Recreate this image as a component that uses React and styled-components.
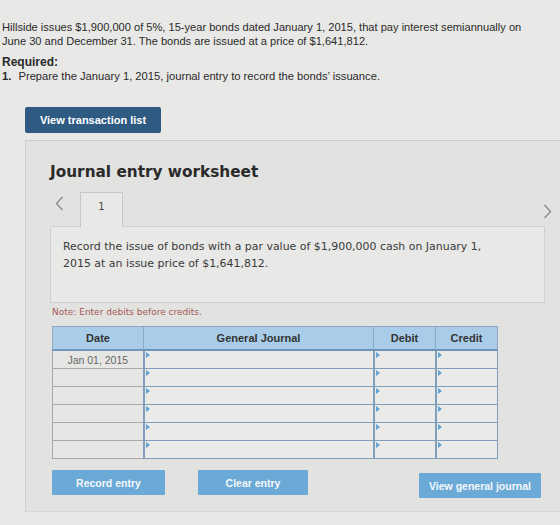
import React from "react";
import styled, { createGlobalStyle } from "styled-components";

const Global = createGlobalStyle`
  html, body { margin: 0; padding: 0; }
  body {
    background: #e8e8e6;
    font-family: "Liberation Sans", Arial, sans-serif;
    color: #2b2b2b;
    width: 560px;
    height: 525px;
    overflow: hidden;
  }
`;

const Page = styled.div`
  padding: 20px 0 0 2px;
`;

const Question = styled.p`
  margin: 0;
  font-size: 11.1px;
  line-height: 14px;
  color: #2a2a2a;
`;

const Required = styled.div`
  margin-top: 7px;
  font-size: 12px;
  line-height: 14px;
  font-weight: bold;
  color: #2a2a2a;
`;

const Step = styled.div`
  font-size: 11.2px;
  line-height: 15px;
  color: #2a2a2a;
  b { margin-right: 4px; }
`;

const DarkButton = styled.button`
  display: block;
  margin: 23px 0 0 25px;
  width: 136px;
  height: 26px;
  border: none;
  border-radius: 2px;
  background: #2f5b83;
  color: #fff;
  font-family: "Liberation Sans", Arial, sans-serif;
  font-weight: bold;
  font-size: 11px;
  padding: 0;
`;

const Panel = styled.section`
  margin: 7px 0 0 25px;
  border-top: 1px solid #c8c8c8;
  border-left: 1px solid #d0d0d0;
  border-bottom: 1px solid #d8d8d8;
  background: #e2e2e0;
  padding: 20px 0 0 24px;
  height: 372px;
  box-sizing: border-box;
`;

const Title = styled.h2`
  margin: 0;
  font-family: "DejaVu Sans", Verdana, sans-serif;
  font-weight: bold;
  font-size: 15.3px;
  line-height: 22px;
  color: #2a2a2a;
`;

const TabRow = styled.div`
  display: flex;
  align-items: flex-start;
  margin-top: 9px;
  height: 34px;
  position: relative;
`;

const Arrow = styled.span`
  box-sizing: border-box;
  width: 30px;
  padding: 4px 0 0 5px;
  display: flex;
`;

const Tab = styled.div`
  width: 43px;
  height: 35px;
  box-sizing: border-box;
  border: 1px solid #c8c8c8;
  border-bottom: none;
  background: #e8e8e6;
  font-family: "DejaVu Sans", sans-serif;
  font-size: 10px;
  color: #444;
  text-align: center;
  line-height: 28px;
  position: relative;
  z-index: 1;
`;

const NextArrow = styled.span`
  position: absolute;
  right: 8px;
  top: 12px;
  display: flex;
`;

const Chevron = ({ dir }) => (
  <svg width="9" height="15" viewBox="0 0 9 15">
    <polyline
      points={dir === "left" ? "7.5,1 1.5,7.5 7.5,14" : "1.5,1 7.5,7.5 1.5,14"}
      fill="none"
      stroke="#8c8c8c"
      strokeWidth="1.4"
    />
  </svg>
);

const Prompt = styled.div`
  width: 495px;
  height: 77px;
  box-sizing: border-box;
  border: 1px solid #cfcfcf;
  background: #e8e8e6;
  padding: 11px 12px;
  font-family: "DejaVu Sans", Verdana, sans-serif;
  font-size: 10.95px;
  line-height: 17px;
  color: #3a3a3a;
`;

const Note = styled.div`
  margin: 3px 0 0 2px;
  font-family: "DejaVu Sans", Verdana, sans-serif;
  font-size: 9px;
  color: #a45a55;
  line-height: 12px;
`;

const Table = styled.table`
  margin: 8px 0 0 2px;
  border-collapse: collapse;
  border: 1px solid #8fa8bd;
  table-layout: fixed;
`;

const Head = styled.th`
  background: #a9cde8;
  border: 1px solid #8fa8bd;
  border-bottom: 2px solid #6f96b8;
  height: 22px;
  padding: 0;
  font-size: 11px;
  font-weight: bold;
  color: #333;
  width: ${(p) => p.$w}px;
`;

const DateCell = styled.td`
  border: 1px solid #a8a8a8;
  background: #e6e6e4;
  height: 17px;
  padding: 0;
  font-size: 10.5px;
  color: #666;
  text-align: center;
`;

const InputCell = styled.td`
  border: 1px solid #7f9fbb;
  border-width: 1px 1px 1px 2px;
  background: #eaeae8;
  height: 17px;
  padding: 0;
  position: relative;
  &::before {
    content: "";
    position: absolute;
    left: 1px;
    top: 1px;
    border-left: 4px solid #5ea2d6;
    border-top: 3px solid transparent;
    border-bottom: 3px solid transparent;
  }
`;

const Actions = styled.div`
  display: flex;
  align-items: flex-start;
  margin: 11px 0 0 2px;
  width: 489px;
`;

const LightButton = styled.button`
  width: ${(p) => p.$w}px;
  height: 25px;
  margin-right: ${(p) => p.$gap || 0}px;
  margin-left: ${(p) => (p.$push ? "auto" : "0")};
  margin-top: ${(p) => p.$drop || 0}px;
  border: none;
  border-radius: 1px;
  background: #6ba9d7;
  color: #f4f8fb;
  font-family: "Liberation Sans", Arial, sans-serif;
  font-weight: bold;
  font-size: 10.5px;
  padding: 0;
`;

const rows = ["Jan 01, 2015", "", "", "", "", ""];

export default function App() {
  return (
    <>
      <Global />
      <Page>
        <Question>
          Hillside issues $1,900,000 of 5%, 15-year bonds dated January 1, 2015, that pay interest semiannually on
          <br />
          June 30 and December 31. The bonds are issued at a price of $1,641,812.
        </Question>
        <Required>Required:</Required>
        <Step>
          <b>1.</b> Prepare the January 1, 2015, journal entry to record the bonds’ issuance.
        </Step>
      </Page>
      <DarkButton>View transaction list</DarkButton>
      <Panel>
        <Title>Journal entry worksheet</Title>
        <TabRow>
          <Arrow>
            <Chevron dir="left" />
          </Arrow>
          <Tab>1</Tab>
          <NextArrow>
            <Chevron dir="right" />
          </NextArrow>
        </TabRow>
        <Prompt>
          Record the issue of bonds with a par value of $1,900,000 cash on January 1,
          <br />
          2015 at an issue price of $1,641,812.
        </Prompt>
        <Note>Note: Enter debits before credits.</Note>
        <Table>
          <thead>
            <tr>
              <Head $w={90}>Date</Head>
              <Head $w={229}>General Journal</Head>
              <Head $w={61}>Debit</Head>
              <Head $w={61}>Credit</Head>
            </tr>
          </thead>
          <tbody>
            {rows.map((d, i) => (
              <tr key={i}>
                <DateCell>{d}</DateCell>
                <InputCell />
                <InputCell />
                <InputCell />
              </tr>
            ))}
          </tbody>
        </Table>
        <Actions>
          <LightButton $w={113} $gap={33}>Record entry</LightButton>
          <LightButton $w={110}>Clear entry</LightButton>
          <LightButton $w={122} $push $drop={3}>View general journal</LightButton>
        </Actions>
      </Panel>
    </>
  );
}
